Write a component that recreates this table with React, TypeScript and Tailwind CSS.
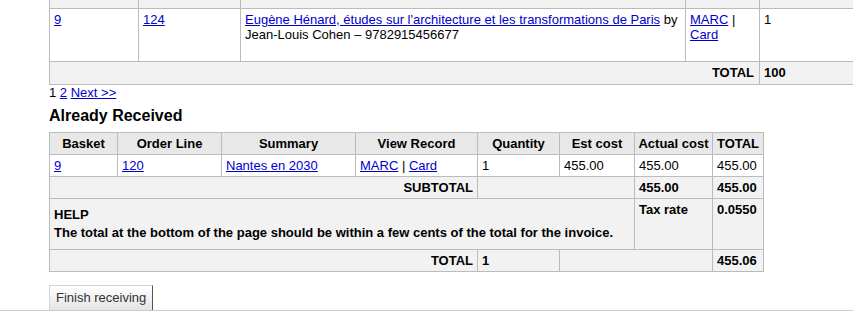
import React from 'react';

const cell = 'border border-[#bbbbbb] px-[4px] py-[3px] leading-[15px] align-top text-left';
const link = 'text-[#0000cc] underline';

function OrdersTable() {
  return (
    <table className="w-[900px] table-fixed border-collapse">
      <colgroup>
        <col className="w-[89px]" />
        <col className="w-[102px]" />
        <col className="w-[445px]" />
        <col className="w-[74px]" />
        <col />
      </colgroup>
      <tbody>
        <tr className="h-[8px] bg-[#f2f2f2]">
          <td className="border border-t-0 border-[#bbbbbb]" />
          <td className="border border-t-0 border-[#bbbbbb]" />
          <td className="border border-t-0 border-[#bbbbbb]" />
          <td className="border border-t-0 border-[#bbbbbb]" />
          <td className="border border-t-0 border-[#bbbbbb]" />
        </tr>
        <tr className="h-[53px]">
          <td className={cell}><a className={link}>9</a></td>
          <td className={cell}><a className={link}>124</a></td>
          <td className={cell}>
            <a className={link}>Eugène Hénard, études sur l'architecture et les transformations de Paris</a> by
            Jean-Louis Cohen – 9782915456677
          </td>
          <td className={cell}>
            <a className={link}>MARC</a> | <a className={link}>Card</a>
          </td>
          <td className={cell}>1</td>
        </tr>
        <tr className="h-[23px] bg-[#f2f2f2] font-bold">
          <td colSpan={4} className="border border-[#bbbbbb] px-[5px] text-right leading-[15px]">TOTAL</td>
          <td className="border border-[#bbbbbb] px-[4px] leading-[15px]">100</td>
        </tr>
      </tbody>
    </table>
  );
}

function ReceivedTable() {
  const head = 'border border-[#bbbbbb] bg-[#e8e8e8] px-[2px] py-[3px] leading-[15px] font-bold text-center whitespace-nowrap';
  const grey = 'border border-[#bbbbbb] bg-[#f2f2f2] px-[4px] py-[3px] leading-[15px] font-bold align-top';
  return (
    <table className="w-[715px] table-fixed border-collapse">
      <colgroup>
        <col className="w-[68px]" />
        <col className="w-[104px]" />
        <col className="w-[134px]" />
        <col className="w-[122px]" />
        <col className="w-[82px]" />
        <col className="w-[75px]" />
        <col className="w-[78px]" />
        <col className="w-[51px]" />
      </colgroup>
      <thead>
        <tr className="h-[22px]">
          <th className={head}>Basket</th>
          <th className={head}>Order Line</th>
          <th className={head}>Summary</th>
          <th className={head}>View Record</th>
          <th className={head}>Quantity</th>
          <th className={head}>Est cost</th>
          <th className={head}>Actual cost</th>
          <th className={head}>TOTAL</th>
        </tr>
      </thead>
      <tbody>
        <tr className="h-[22px]">
          <td className={cell}><a className={link}>9</a></td>
          <td className={cell}><a className={link}>120</a></td>
          <td className={cell}><a className={link}>Nantes en 2030</a></td>
          <td className={cell}>
            <a className={link}>MARC</a> | <a className={link}>Card</a>
          </td>
          <td className={cell}>1</td>
          <td className={cell}>455.00</td>
          <td className={cell}>455.00</td>
          <td className={cell}>455.00</td>
        </tr>
        <tr className="h-[22px]">
          <td colSpan={4} className={`${grey} text-right`}>SUBTOTAL</td>
          <td colSpan={2} className={grey} />
          <td className={grey}>455.00</td>
          <td className={grey}>455.00</td>
        </tr>
        <tr className="h-[51px]">
          <td colSpan={6} className="border border-[#bbbbbb] bg-[#f2f2f2] px-[4px] py-[7px] leading-[18px] font-bold align-middle">
            <div>HELP</div>
            <div>The total at the bottom of the page should be within a few cents of the total for the invoice.</div>
          </td>
          <td className={grey}>Tax rate</td>
          <td className={grey}>0.0550</td>
        </tr>
        <tr className="h-[22px]">
          <td colSpan={4} className={`${grey} text-right`}>TOTAL</td>
          <td className={grey}>1</td>
          <td colSpan={2} className={grey} />
          <td className={grey}>455.06</td>
        </tr>
      </tbody>
    </table>
  );
}

export default function App() {
  return (
    <div className="h-[329px] w-[853px] overflow-hidden bg-white font-['Liberation_Sans',Arial,sans-serif] text-[13px] text-black">
      <div className="pl-[49px]">
        <OrdersTable />
        <div className="leading-[16px]">
          1 <a className={link}>2</a> <a className={link}>Next &gt;&gt;</a>
        </div>
        <h2 className="mt-[6px] mb-[7px] text-[16px] font-bold leading-[18px]">Already Received</h2>
        <ReceivedTable />
        <button className="mt-[13px] h-[25px] border-t border-l border-r border-t-[#d4d4d4] border-l-[#d4d4d4] border-r-[#555555] bg-gradient-to-b from-white to-[#e4e4e4] px-[6px] text-[13px] leading-[15px] text-[#333333]">
          Finish receiving
        </button>
      </div>
      <div className="border-t border-[#cccccc]" />
    </div>
  );
}
